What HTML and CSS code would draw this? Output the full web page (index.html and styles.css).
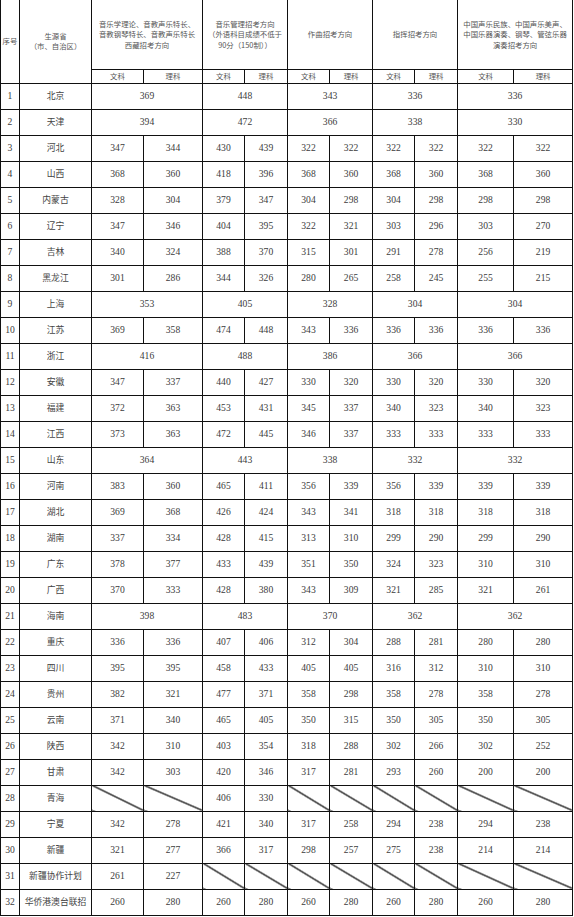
FILE: index.html
```html
<!DOCTYPE html>
<html lang="zh">
<head>
<meta charset="utf-8">
<title>录取分数线</title>
<link rel="stylesheet" href="styles.css">
</head>
<body>
<table class="grid">
<colgroup>
<col class="c19"><col class="c72"><col class="c52"><col class="c59"><col class="c42"><col class="c43"><col class="c42"><col class="c43"><col class="c42"><col class="c43"><col class="c56"><col class="c59">
</colgroup>
<thead>
<tr class="h1">
<th rowspan="2" class="hd">序号</th>
<th rowspan="2" class="hd">生源省<br>（市、自治区）</th>
<th colspan="2" class="hd">音乐学理论、音教声乐特长、<br>音教钢琴特长、音教声乐特长<br>西藏招考方向</th>
<th colspan="2" class="hd">音乐管理招考方向<br>（外语科目成绩不低于<br>90分（150制））</th>
<th colspan="2" class="hd">作曲招考方向</th>
<th colspan="2" class="hd">指挥招考方向</th>
<th colspan="2" class="hd">中国声乐民族、中国声乐美声、<br>中国乐器演奏、钢琴、管弦乐器<br>演奏招考方向</th>
</tr>
<tr class="h2">
<th class="sub">文科</th><th class="sub">理科</th>
<th class="sub">文科</th><th class="sub">理科</th>
<th class="sub">文科</th><th class="sub">理科</th>
<th class="sub">文科</th><th class="sub">理科</th>
<th class="sub">文科</th><th class="sub">理科</th>
</tr>
</thead>
<tbody>
<tr><td>1</td><td class="p">北京</td><td colspan="2">369</td><td colspan="2">448</td><td colspan="2">343</td><td colspan="2">336</td><td colspan="2">336</td></tr>
<tr><td>2</td><td class="p">天津</td><td colspan="2">394</td><td colspan="2">472</td><td colspan="2">366</td><td colspan="2">338</td><td colspan="2">330</td></tr>
<tr><td>3</td><td class="p">河北</td><td>347</td><td>344</td><td>430</td><td>439</td><td>322</td><td>322</td><td>322</td><td>322</td><td>322</td><td>322</td></tr>
<tr><td>4</td><td class="p">山西</td><td>368</td><td>360</td><td>418</td><td>396</td><td>368</td><td>360</td><td>368</td><td>360</td><td>368</td><td>360</td></tr>
<tr><td>5</td><td class="p">内蒙古</td><td>328</td><td>304</td><td>379</td><td>347</td><td>304</td><td>298</td><td>304</td><td>298</td><td>298</td><td>298</td></tr>
<tr><td>6</td><td class="p">辽宁</td><td>347</td><td>346</td><td>404</td><td>395</td><td>322</td><td>321</td><td>303</td><td>296</td><td>303</td><td>270</td></tr>
<tr><td>7</td><td class="p">吉林</td><td>340</td><td>324</td><td>388</td><td>370</td><td>315</td><td>301</td><td>291</td><td>278</td><td>256</td><td>219</td></tr>
<tr><td>8</td><td class="p">黑龙江</td><td>301</td><td>286</td><td>344</td><td>326</td><td>280</td><td>265</td><td>258</td><td>245</td><td>255</td><td>215</td></tr>
<tr><td>9</td><td class="p">上海</td><td colspan="2">353</td><td colspan="2">405</td><td colspan="2">328</td><td colspan="2">304</td><td colspan="2">304</td></tr>
<tr><td>10</td><td class="p">江苏</td><td>369</td><td>358</td><td>474</td><td>448</td><td>343</td><td>336</td><td>336</td><td>336</td><td>336</td><td>336</td></tr>
<tr><td>11</td><td class="p">浙江</td><td colspan="2">416</td><td colspan="2">488</td><td colspan="2">386</td><td colspan="2">366</td><td colspan="2">366</td></tr>
<tr><td>12</td><td class="p">安徽</td><td>347</td><td>337</td><td>440</td><td>427</td><td>330</td><td>320</td><td>330</td><td>320</td><td>330</td><td>320</td></tr>
<tr><td>13</td><td class="p">福建</td><td>372</td><td>363</td><td>453</td><td>431</td><td>345</td><td>337</td><td>340</td><td>323</td><td>340</td><td>323</td></tr>
<tr><td>14</td><td class="p">江西</td><td>373</td><td>363</td><td>472</td><td>445</td><td>346</td><td>337</td><td>333</td><td>333</td><td>333</td><td>333</td></tr>
<tr><td>15</td><td class="p">山东</td><td colspan="2">364</td><td colspan="2">443</td><td colspan="2">338</td><td colspan="2">332</td><td colspan="2">332</td></tr>
<tr><td>16</td><td class="p">河南</td><td>383</td><td>360</td><td>465</td><td>411</td><td>356</td><td>339</td><td>356</td><td>339</td><td>339</td><td>339</td></tr>
<tr><td>17</td><td class="p">湖北</td><td>369</td><td>368</td><td>426</td><td>424</td><td>343</td><td>341</td><td>318</td><td>318</td><td>318</td><td>318</td></tr>
<tr><td>18</td><td class="p">湖南</td><td>337</td><td>334</td><td>428</td><td>415</td><td>313</td><td>310</td><td>299</td><td>290</td><td>299</td><td>290</td></tr>
<tr><td>19</td><td class="p">广东</td><td>378</td><td>377</td><td>433</td><td>439</td><td>351</td><td>350</td><td>324</td><td>323</td><td>310</td><td>310</td></tr>
<tr><td>20</td><td class="p">广西</td><td>370</td><td>333</td><td>428</td><td>380</td><td>343</td><td>309</td><td>321</td><td>285</td><td>321</td><td>261</td></tr>
<tr><td>21</td><td class="p">海南</td><td colspan="2">398</td><td colspan="2">483</td><td colspan="2">370</td><td colspan="2">362</td><td colspan="2">362</td></tr>
<tr><td>22</td><td class="p">重庆</td><td>336</td><td>336</td><td>407</td><td>406</td><td>312</td><td>304</td><td>288</td><td>281</td><td>280</td><td>280</td></tr>
<tr><td>23</td><td class="p">四川</td><td>395</td><td>395</td><td>458</td><td>433</td><td>405</td><td>405</td><td>316</td><td>312</td><td>310</td><td>310</td></tr>
<tr><td>24</td><td class="p">贵州</td><td>382</td><td>321</td><td>477</td><td>371</td><td>358</td><td>298</td><td>358</td><td>278</td><td>358</td><td>278</td></tr>
<tr><td>25</td><td class="p">云南</td><td>371</td><td>340</td><td>465</td><td>405</td><td>350</td><td>315</td><td>350</td><td>305</td><td>350</td><td>305</td></tr>
<tr><td>26</td><td class="p">陕西</td><td>342</td><td>310</td><td>403</td><td>354</td><td>318</td><td>288</td><td>302</td><td>266</td><td>302</td><td>252</td></tr>
<tr><td>27</td><td class="p">甘肃</td><td>342</td><td>303</td><td>420</td><td>346</td><td>317</td><td>281</td><td>293</td><td>260</td><td>200</td><td>200</td></tr>
<tr><td>28</td><td class="p">青海</td><td class="na"></td><td class="na"></td><td>406</td><td>330</td><td class="na"></td><td class="na"></td><td class="na"></td><td class="na"></td><td class="na"></td><td class="na"></td></tr>
<tr><td>29</td><td class="p">宁夏</td><td>342</td><td>278</td><td>421</td><td>340</td><td>317</td><td>258</td><td>294</td><td>238</td><td>294</td><td>238</td></tr>
<tr><td>30</td><td class="p">新疆</td><td>321</td><td>277</td><td>366</td><td>317</td><td>298</td><td>257</td><td>275</td><td>238</td><td>214</td><td>214</td></tr>
<tr><td>31</td><td class="p">新疆协作计划</td><td>261</td><td>227</td><td class="na"></td><td class="na"></td><td class="na"></td><td class="na"></td><td class="na"></td><td class="na"></td><td class="na"></td><td class="na"></td></tr>
<tr><td>32</td><td class="p">华侨港澳台联招</td><td>260</td><td>280</td><td>260</td><td>280</td><td>260</td><td>280</td><td>260</td><td>280</td><td>260</td><td>280</td></tr>
</tbody>
</table>
</body>
</html>
```
FILE: styles.css
```css
html, body {
  margin: 0;
  padding: 0;
  background: #fff;
}

.grid {
  border-collapse: collapse;
  table-layout: fixed;
  width: 573px;
  font-family: "Liberation Serif", "Noto Sans CJK SC", serif;
  color: #3c3c3c;
}

.c19 { width: 19px; }
.c72 { width: 72px; }
.c52 { width: 52px; }
.c59 { width: 59px; }
.c42 { width: 42px; }
.c43 { width: 43px; }
.c56 { width: 56px; }

.grid th,
.grid td {
  border: 1px solid #111;
  padding: 0;
  text-align: center;
  vertical-align: middle;
  font-weight: normal;
  white-space: nowrap;
  overflow: hidden;
}

.grid thead tr.h1 {
  height: 69px;
}

.grid thead tr.h1 th {
  border-top: none;
}

.grid thead tr.h2 {
  height: 14px;
}

.grid .hd {
  font-family: "Noto Sans CJK SC", sans-serif;
  font-size: 7.4px;
  line-height: 10.5px;
  color: #555;
}

.grid .sub {
  font-family: "Noto Sans CJK SC", sans-serif;
  font-size: 7.4px;
  line-height: 10px;
  color: #555;
}

.grid tbody tr {
  height: 26px;
}

.grid tbody td {
  font-size: 9.6px;
  line-height: 12px;
}

.grid tbody td.p {
  font-family: "Noto Sans CJK SC", sans-serif;
  font-size: 8.8px;
  color: #444;
}

.grid tbody td.na {
  background-image: linear-gradient(to top right,
    transparent calc(50% - 0.9px),
    #111 calc(50% - 0.4px),
    #111 calc(50% + 0.4px),
    transparent calc(50% + 0.9px));
}
```
